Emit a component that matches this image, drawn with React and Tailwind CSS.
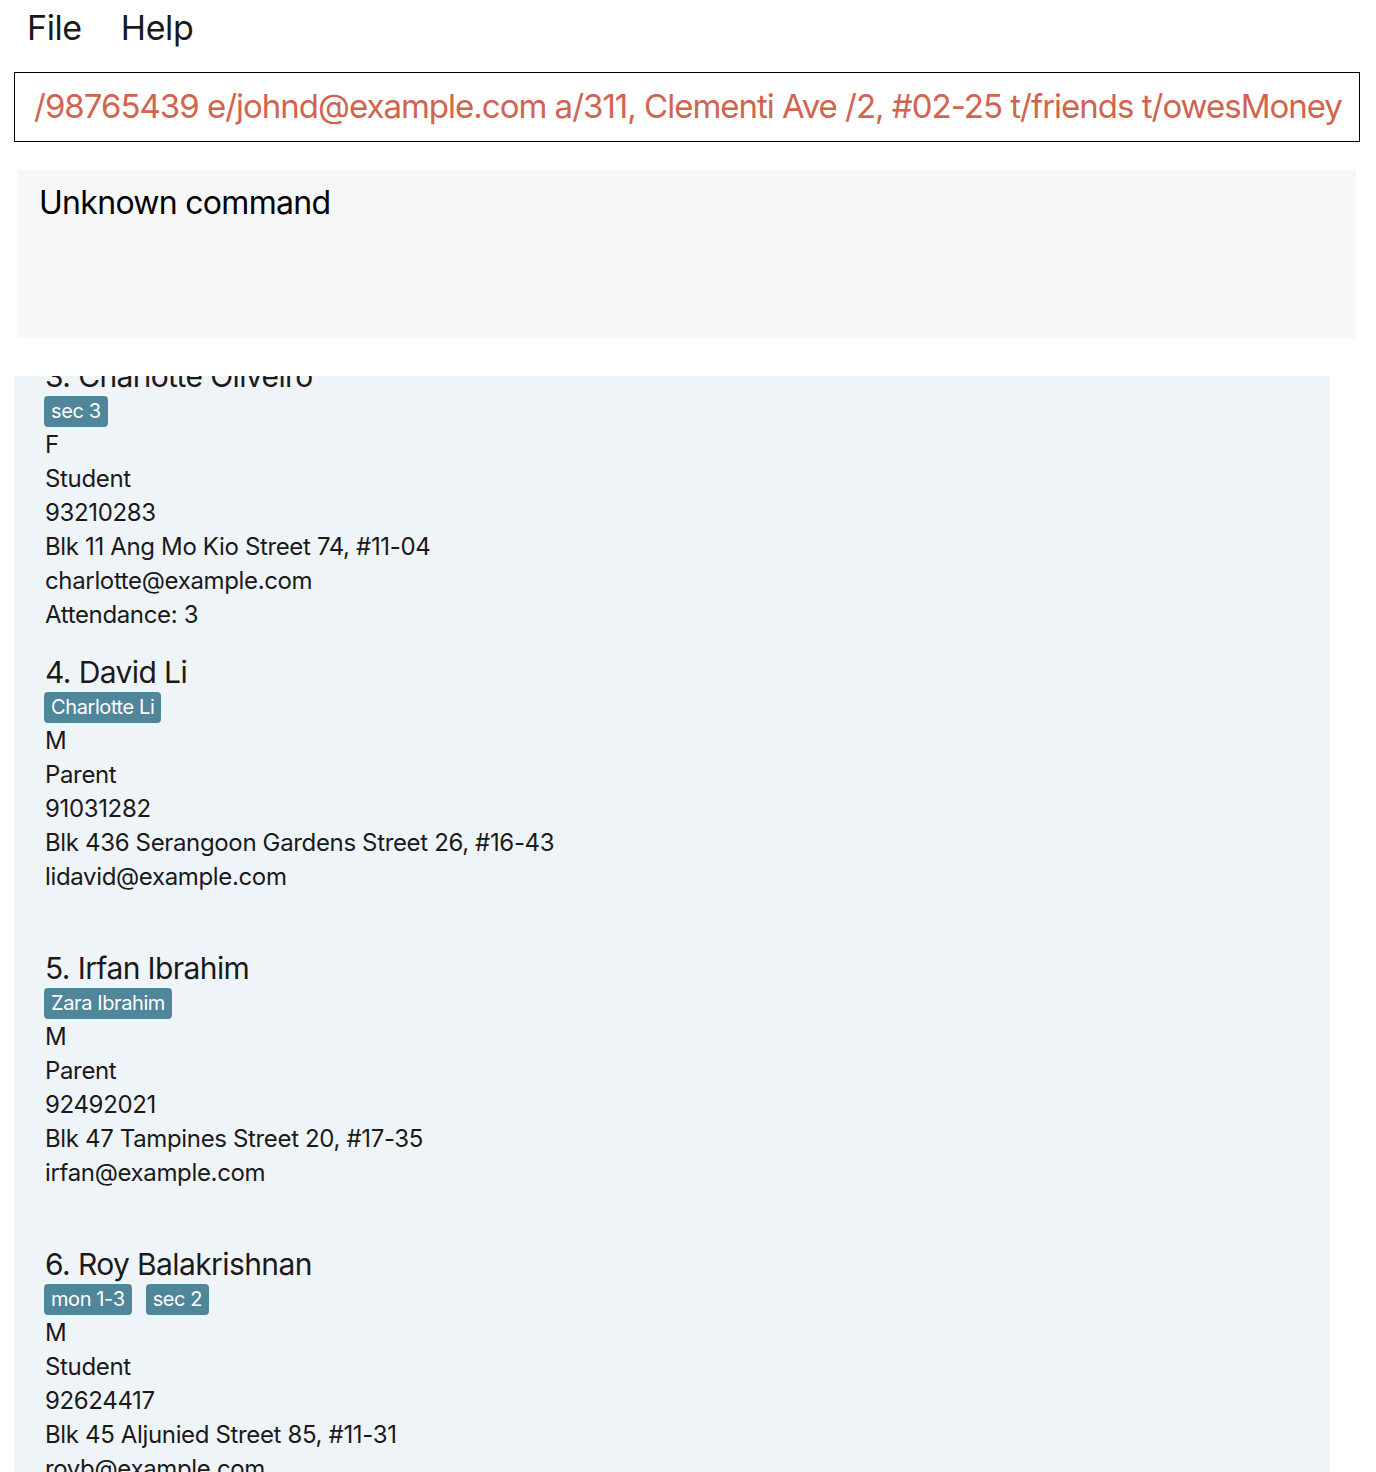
const PEOPLE = [
  {
    id: 3, name: 'Charlotte Oliveiro', tags: ['sec 3'], gender: 'F', role: 'Student',
    phone: '93210283', address: 'Blk 11 Ang Mo Kio Street 74, #11-04',
    email: 'charlotte@example.com', attendance: 'Attendance: 3'
  },
  {
    id: 4, name: 'David Li', tags: ['Charlotte Li'], gender: 'M', role: 'Parent',
    phone: '91031282', address: 'Blk 436 Serangoon Gardens Street 26, #16-43',
    email: 'lidavid@example.com', attendance: ''
  },
  {
    id: 5, name: 'Irfan Ibrahim', tags: ['Zara Ibrahim'], gender: 'M', role: 'Parent',
    phone: '92492021', address: 'Blk 47 Tampines Street 20, #17-35',
    email: 'irfan@example.com', attendance: ''
  },
  {
    id: 6, name: 'Roy Balakrishnan', tags: ['mon 1-3', 'sec 2'], gender: 'M', role: 'Student',
    phone: '92624417', address: 'Blk 45 Aljunied Street 85, #11-31',
    email: 'royb@example.com', attendance: ''
  }
]

function PersonCard({ p }) {
  const lines = [p.gender, p.role, p.phone, p.address, p.email, p.attendance]
  return (
    <div className="pl-[31px] pb-[20px]">
      <div className="text-[30px] leading-[40px] tracking-[-0.6px] text-[#1a1a1a]">{p.id}. {p.name}</div>
      <div className="flex gap-[14px] h-[32px] items-start ml-[-1px]">
        {p.tags.map(t => (
          <span key={t} className="bg-[#4f8699] text-white text-[20px] leading-[31px] h-[31px] px-[7px] tracking-[-0.4px] rounded-[4px]">{t}</span>
        ))}
      </div>
      {lines.map((l, i) => (
        <div key={i} className="text-[24px] leading-[34px] h-[34px] tracking-[-0.35px] text-[#1a1a1a]">{l}</div>
      ))}
    </div>
  )
}

export default function App() {
  return (
    <div className="w-[1376px] h-[1472px] overflow-hidden bg-white font-['Inter',sans-serif]">
      {/* menu */}
      <div className="flex gap-[39px] pl-[27px] h-[56px] pb-[2px] items-center text-[34px] tracking-[-0.4px] text-[#1a1a1a]">
        <span>File</span>
        <span>Help</span>
      </div>

      {/* command box */}
      <div className="ml-[14px] mr-[16px] mt-[16px] h-[70px] border border-black flex items-center overflow-hidden pl-[19px] pr-[20px]">
        <div className="text-[33px] tracking-[-1px] text-[#d0654f] whitespace-nowrap">
          /98765439 e/johnd@example.com a/311, Clementi Ave /2, #02-25 t/friends t/owesMoney
        </div>
      </div>

      {/* result */}
      <div className="ml-[18px] mr-[20px] mt-[28px] h-[168px] bg-[#f7f7f7] pl-[21px] pt-[9px]">
        <div className="text-[32px] tracking-[-0.7px] text-black">Unknown command</div>
      </div>

      {/* list */}
      <div className="ml-[14px] w-[1316px] mt-[38px] h-[1096px] bg-[#eff4f8] overflow-hidden">
        <div className="mt-[-20px]">
          {PEOPLE.map(p => <PersonCard key={p.id} p={p} />)}
        </div>
      </div>
    </div>
  )
}
